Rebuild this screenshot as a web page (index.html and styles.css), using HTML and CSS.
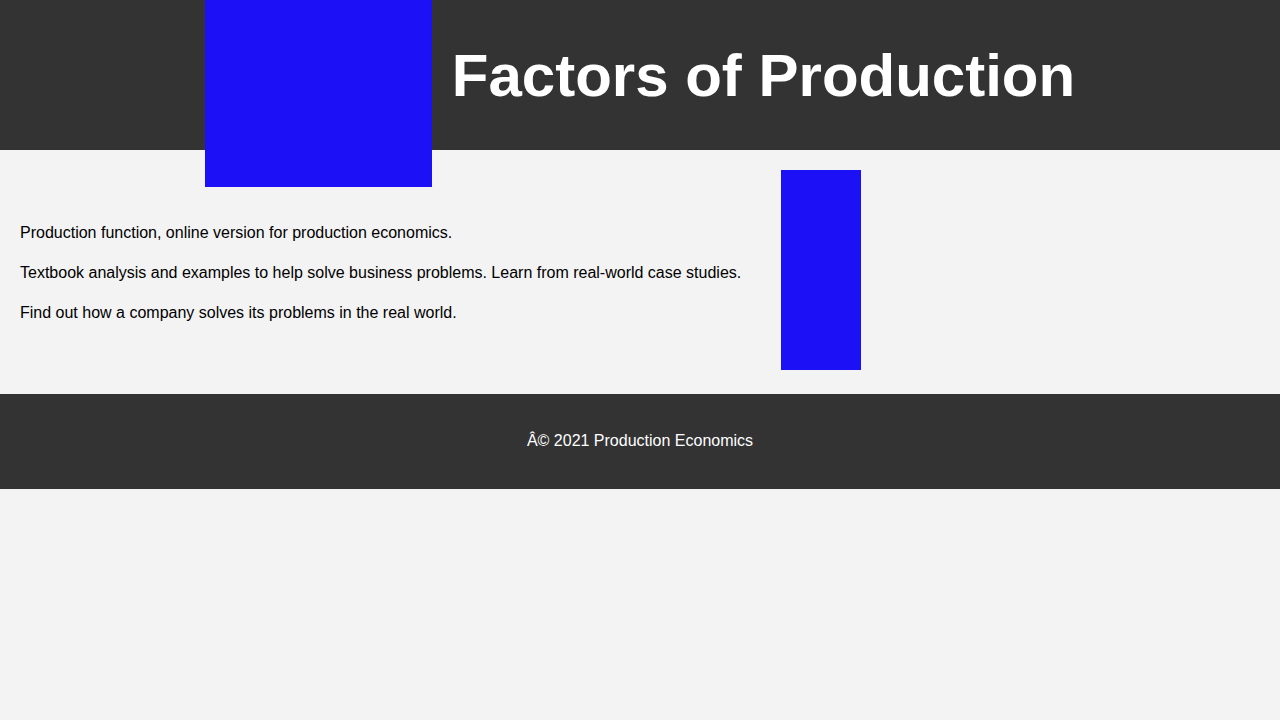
FILE: index.html
```html
<!DOCTYPE html>
<html lang="en">
<head>
<meta charset="utf-8">
<title>Factors of Production</title>
<link rel="stylesheet" href="styles.css">
</head>
<body>
<header class="site-header">
  <div class="logo" aria-hidden="true"></div>
  <h1 class="title">Factors of Production</h1>
</header>
<main class="content">
  <div class="text">
    <p>Production function, online version for production economics.</p>
    <p>Textbook analysis and examples to help solve business problems. Learn from real-world case studies.</p>
    <p>Find out how a company solves its problems in the real world.</p>
  </div>
  <div class="figure" aria-hidden="true"></div>
</main>
<footer class="site-footer">
  <p>Â© 2021 Production Economics</p>
</footer>
</body>
</html>
```

FILE: styles.css
```css
html, body {
  margin: 0;
  padding: 0;
}
body {
  background: #f3f3f3;
  color: #000;
  font-family: "Liberation Sans", Arial, sans-serif;
  font-size: 16px;
}
.site-header {
  height: 150px;
  background: #333333;
  display: flex;
  justify-content: center;
  align-items: center;
  gap: 20px;
}
.logo {
  align-self: flex-start;
  width: 227px;
  height: 187px;
  background: #1c10f6;
  position: relative;
  z-index: 1;
}
.title {
  margin: 0;
  color: #ffffff;
  font-size: 60px;
  font-weight: bold;
}
.content {
  display: flex;
  align-items: center;
  gap: 40px;
  padding: 20px 20px 24px;
}
.text {
  padding-top: 6px;
}
.text p {
  margin: 16px 0;
  line-height: 24px;
}
.figure {
  width: 80px;
  height: 200px;
  background: #1c10f6;
  flex-shrink: 0;
}
.site-footer {
  background: #333333;
  color: #ffffff;
  text-align: center;
  padding: 37px 20px 39px;
}
.site-footer p {
  margin: 0;
  line-height: 19px;
}
```
